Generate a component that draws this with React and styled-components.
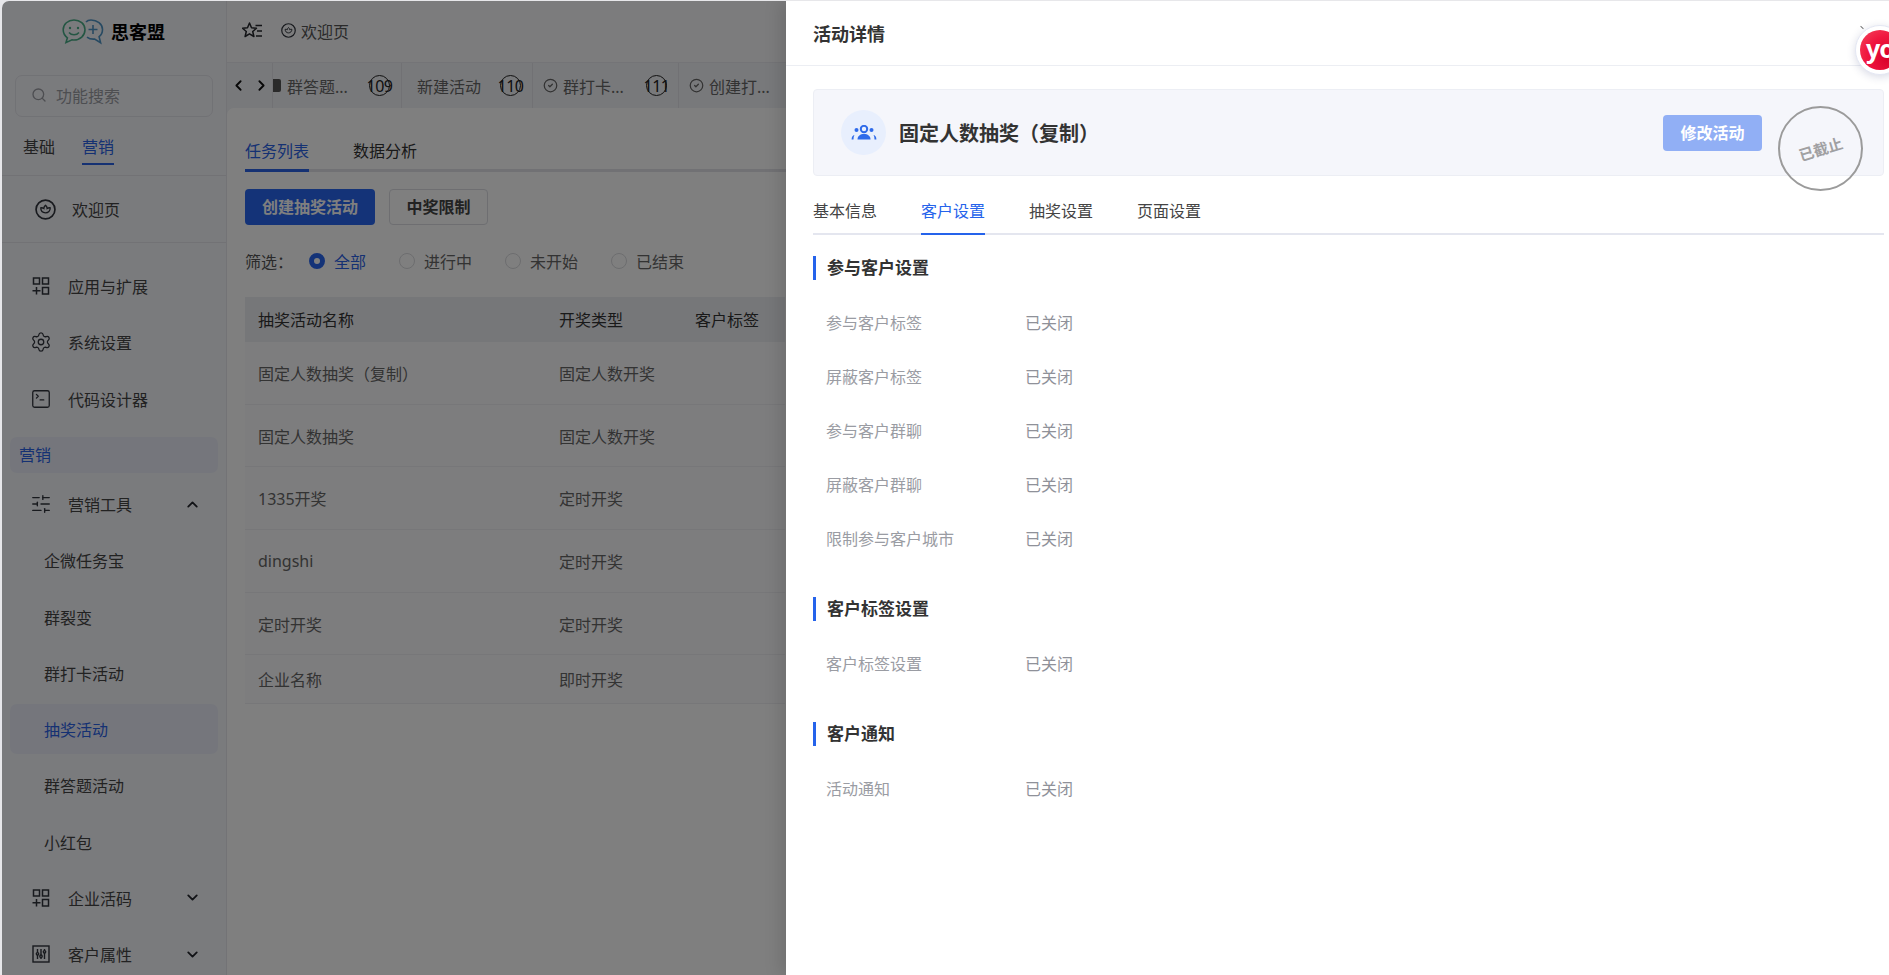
import React from "react";
import styled, { createGlobalStyle } from "styled-components";
import { Search, ChevronUp, ChevronDown, ChevronLeft, ChevronRight, Settings, SquareTerminal, SlidersHorizontal, CircleCheck } from "lucide-react";

const Global = createGlobalStyle`
  html, body { margin: 0; padding: 0; background: #e7e7ea; overflow: hidden; }
  body { font-family: "Noto Sans", "Noto Sans CJK SC", sans-serif; font-size: 16px; color: #333; }
  * { box-sizing: border-box; }
`;

const Frame = styled.div`
  position: relative; margin: 1px 0 0 2px; width: 1887px; height: 974px;
  overflow: hidden; border-top-left-radius: 7px; display: flex; background: #fff;
`;
const Side = styled.aside`
  width: 225px; flex: none; height: 100%; background: #f5f6fb; border-right: 1px solid #e6e7ec;
  overflow: hidden; display: flex; flex-direction: column;
`;
const LogoBar = styled.div`
  height: 62px; flex: none; display: flex; align-items: center; padding-left: 60px; gap: 7px;
`;
const LogoText = styled.span`font-size: 18px; font-weight: 700; color: #000; margin-top: -2px;`;
const SearchBox = styled.div`
  flex: none; height: 42px; margin: 12px 13px 0 13px; border: 1px solid #e3e4ea; border-radius: 7px;
  display: flex; align-items: center; gap: 9px; padding-left: 15px; padding-bottom: 2px; color: #9a9ca3;
`;
const SideTabs = styled.div`
  flex: none; height: 59px; display: flex; gap: 27px; padding-left: 21px; border-bottom: 1px solid #e4e5ea; 
`;
const SideTab = styled.div`
  height: 48px; padding-top: 18px; line-height: 24px; color: ${p => p.$on ? "#2a62e6" : "#444"};
  border-bottom: 2px solid ${p => p.$on ? "#2a62e6" : "transparent"};
`;
const WelcomeRow = styled.div`
  flex: none; height: 67px; display: flex; align-items: center; gap: 16px; padding-left: 33px;
  border-bottom: 1px solid #e4e5ea; color: #444;
`;
const NavList = styled.div`flex: none; padding-top: 15px;`;
const NavItem = styled.div`
  height: 56.3px; flex: none; display: flex; align-items: center; padding-left: 30px; gap: 18px; color: #444; position: relative;
  svg.lead { flex: none; color: #30343c; }
  svg.big { margin: 0 -2px; }
`;
const NavChevron = styled.span`margin-left: auto; margin-right: 25px; display: flex; color: #23262c;`;
const GroupLabel = styled.div`
  flex: none; height: 36px; margin: 10px 8px 3px 8px; background: #eaedf8; border-radius: 7px;
  padding-left: 9px; line-height: 36px; color: #2a62e6;
`;
const SubItem = styled.div`
  flex: none; height: ${p => p.$on ? "50px" : "56.25px"}; margin: ${p => p.$on ? "3.1px 8px" : "0 8px"};
  padding-left: 34px; display: flex; align-items: center; border-radius: 7px; color: ${p => p.$on ? "#2a62e6" : "#444"};
  background: ${p => p.$on ? "#eaedf8" : "transparent"};
`;

const Main = styled.main`flex: 1; min-width: 0; display: flex; flex-direction: column; background: #f1f2f6;`;
const TopBar = styled.div`
  height: 62px; flex: none; display: flex; align-items: center; padding-left: 15px; padding-bottom: 2px; background: #f8f9fb;
  border-bottom: 1px solid #e8e9ee; color: #555;
`;
const Crumb = styled.span`display: flex; align-items: center; gap: 5px; margin-left: 18px;`;
const Strip = styled.div`height: 45px; flex: none; display: flex; align-items: stretch; overflow: hidden;`;
const StripNav = styled.div`
  width: 46px; flex: none; display: flex; align-items: center; justify-content: space-between; padding: 0 2px 0 3px;
  border-right: 1px solid #e2e3e8; color: #111;
`;
const StripTab = styled.div`
  width: ${p => p.$w}px; flex: none; display: flex; align-items: center; padding-left: ${p => p.$pl}px; gap: 5px;
  border-right: 1px solid #e2e3e8; color: #666; position: relative; white-space: nowrap;
`;
const ClippedIcon = styled.span`
  position: absolute; left: 0; top: 16px; width: 8px; height: 13px; border-radius: 0 2px 2px 0; background: #555;
`;
const Count = styled.span`
  position: absolute; right: ${p => p.$r}px; top: 12px; width: 21px; height: 21px; border-radius: 50%; border: 1px solid #222;
  display: flex; align-items: center; justify-content: center; color: #222; font-size: 16px; letter-spacing: -.5px;
`;
const Content = styled.div`
  flex: 1; background: #fff; border-top-left-radius: 7px; padding: 0 0 0 18px; min-height: 0; overflow: hidden;
`;
const ContentTabs = styled.div`
  display: flex; gap: 44px; height: 64px; border-bottom: 3px solid #e2e3e9; margin-right: -400px;
`;
const ContentTab = styled.div`
  height: 64px; padding-top: 31px; line-height: 24px; color: ${p => p.$on ? "#2a62e6" : "#333"};
  border-bottom: 3px solid ${p => p.$on ? "#2a62e6" : "transparent"};
`;
const Actions = styled.div`display: flex; gap: 14px; margin-top: 17px;`;
const PrimaryBtn = styled.button`
  height: 36px; width: 130px; border: 0; border-radius: 4px; background: #2867f0; color: #fff;
  font: 700 16px "Noto Sans", "Noto Sans CJK SC", sans-serif; padding: 0 0 2px;
`;
const GhostBtn = styled.button`
  height: 36px; width: 99px; border: 1px solid #dcdde3; border-radius: 4px; background: #fff; color: #444;
  font: 700 16px "Noto Sans", "Noto Sans CJK SC", sans-serif; padding: 0 0 2px;
`;
const Filter = styled.div`display: flex; align-items: center; height: 24px; margin-top: 24px; color: #555;`;
const FilterLabel = styled.span`width: 64px; flex: none;`;
const RadioItem = styled.span`
  display: flex; align-items: center; gap: 9px; width: ${p => p.$w}px; flex: none; color: ${p => p.$on ? "#2a62e6" : "#666"};
`;
const RadioDot = styled.span`
  width: 16px; height: 16px; border-radius: 50%; flex: none;
  ${p => p.$on ? "border: 5px solid #2867f0; background: #fff;" : "border: 1px solid #d9dade;"}
`;
const Table = styled.div`margin-top: 24px; width: 540px;`;
const HeadRow = styled.div`
  display: grid; grid-template-columns: 301px 136px 1fr; height: 45px; align-items: center;
  background: #eceef3; padding: 0 0 2px 13px; color: #333; white-space: nowrap;
`;
const Row = styled.div`
  display: grid; grid-template-columns: 301px 136px 1fr; height: ${p => p.$h}px; align-items: center;
  padding-left: 13px; border-bottom: 1px solid #eeeff2; background: #fbfbfc; color: #666; white-space: nowrap;
`;

const Overlay = styled.div`position: absolute; inset: 0; background: rgba(0,0,0,.5);`;
const Drawer = styled.section`
  position: absolute; top: 0; bottom: 0; left: 784px; right: 0; background: #fff;
  box-shadow: -6px 0 16px rgba(0,0,0,.12); display: flex; flex-direction: column;
`;
const DrawerHead = styled.header`
  height: 65px; flex: none; display: flex; align-items: center; padding-left: 27px;
  border-bottom: 1px solid #eceef3; font-size: 18px; font-weight: 700; color: #333;
`;
const DrawerBody = styled.div`padding: 23px 5px 0 27px;`;
const Card = styled.div`
  position: relative; height: 87px; display: flex; align-items: center; padding: 0 121px 0 27px;
  background: #f5f6fb; border: 1px solid #eceef4; border-radius: 4px;
`;
const Avatar = styled.div`
  width: 45px; height: 45px; border-radius: 50%; background: #e8effd; display: flex; align-items: center; justify-content: center; flex: none;
`;
const CardTitle = styled.h2`margin: 0 0 0 13px; flex: 1; font-size: 20px; font-weight: 700; color: #333;`;
const EditBtn = styled.button`
  width: 99px; height: 36px; border: 0; border-radius: 4px; background: #91aff5; color: #fff;
  font: 700 16px "Noto Sans", "Noto Sans CJK SC", sans-serif; padding: 0 0 2px;
`;
const Stamp = styled.div`
  position: absolute; top: 16px; right: 20px; width: 85px; height: 85px; border-radius: 50%; border: 2px solid #9b9b9b;
  display: flex; align-items: center; justify-content: center; color: #a0a0a2; font-size: 15px; font-weight: 700;
  span { display: block; transform: translateY(0) rotate(-17deg); }
`;
const DrawerTabs = styled.div`
  height: 59px; display: flex; gap: 44px; align-items: flex-end; border-bottom: 2px solid #e4e6ef;
`;
const DrawerTab = styled.div`
  height: 47px; line-height: 24px; padding-top: 11px; margin-bottom: -2px; color: ${p => p.$on ? "#2563eb" : "#444"};
  border-bottom: 2px solid ${p => p.$on ? "#2563eb" : "transparent"};
`;
const Section = styled.div`margin-top: ${p => p.$mt}px;`;
const SectionTitle = styled.h3`
  margin: 0 0 15px; height: 24px; line-height: 24px; border-left: 3px solid #2563eb; padding-left: 11px;
  font-size: 17px; font-weight: 700; color: #333;
`;
const FieldRow = styled.div`display: flex; align-items: center; height: 54px; padding-left: 13px;`;
const FieldLabel = styled.span`width: 199px; flex: none; color: #9a9ca3;`;
const FieldValue = styled.span`color: #8f9199;`;

const Bubble = styled.div`
  position: absolute; top: 24px; right: -16px; width: 50px; height: 50px; border-radius: 50%; background: #fff;
  border: 1px solid #e4e7f3; box-shadow: 0 2px 8px rgba(40,50,110,.18); display: flex; align-items: center; justify-content: center;
`;
const BubbleInner = styled.div`
  width: 40px; height: 40px; border-radius: 50%; background: radial-gradient(circle at 70% 70%, #d8002a 0, #f0173f 55%, #f5475f 100%);
  color: #fff; font-size: 25px; font-weight: 700; line-height: 36px; text-align: center; letter-spacing: -1px; white-space: nowrap;
`;
const BubbleClose = styled.span`
  position: absolute; top: 26px; right: 25px; width: 4px; height: 1px; background: #777; transform: rotate(45deg);
`;

const Logo = () => (
  <svg width="42" height="26" viewBox="0 0 42 26" fill="none">
    <path d="M12 1C6 1 1.2 5 1.2 10.8c0 3.4 1.7 6.2 4.2 8L4 23.6l6-2.8c.7.1 1.4.2 2 .2 6 0 11-4.4 11-10.2S18 1 12 1Z" stroke="#49ad87" strokeWidth="1.6"/>
    <circle cx="8" cy="9" r="1.2" fill="#49ad87"/><circle cx="16" cy="9" r="1.2" fill="#49ad87"/>
    <path d="M7 13.5c2.5 3 7.5 3 10 0" stroke="#49ad87" strokeWidth="1.5"/>
    <path d="M24 3c1-1.2 3-2 5-2 6 0 11.5 4 11.5 9.500 0 3-1.300 5.600-3.400 7.200l1.500 6-6-3.600c-2.800.2-5.600-.4-7.600-2" stroke="#4f94c4" strokeWidth="1.6"/>
    <path d="M31 6v9M26.500 10.500h9" stroke="#4f94c4" strokeWidth="1.6"/>
  </svg>
);
const Lotus = ({ size = 21 }) => (
  <svg className="lead" width={size} height={size} viewBox="0 0 20 20" fill="none">
    <circle cx="10" cy="10" r="9" stroke="#30343c" strokeWidth="1.6"/>
    <path d="M10 6c1 .8 1.500 1.800 1.600 3 .9-.6 1.900-.8 2.900-.6 0 2.900-1.900 4.800-4.500 4.800S5.500 11.300 5.500 8.400c1-.2 2 0 2.900.6C8.500 7.800 9 6.800 10 6Z" stroke="#30343c" strokeWidth="1.300"/>
  </svg>
);
const Apps = () => (
  <svg className="lead" width="18" height="18" viewBox="0 0 18 18" fill="none" stroke="#30343c" strokeWidth="1.5">
    <rect x="1.500" y="1" width="6" height="6"/><rect x="10.500" y="1" width="6" height="6"/><rect x="10.500" y="10.500" width="6" height="6.500"/>
    <path d="M4.500 10v7.500M.5 13.700h8"/>
  </svg>
);
const Attr = () => (
  <svg className="lead" width="18" height="18" viewBox="0 0 18 18" fill="none" stroke="#30343c" strokeWidth="1.400">
    <rect x="1" y="1" width="16" height="16"/>
    <path d="M5.500 4v3.500M5.500 10v4M9 4v6M9 12.500V14M12.500 4v1.500M12.500 8v6"/>
    <circle cx="5.500" cy="8.800" r="1.200"/><circle cx="9" cy="11.200" r="1.200"/><circle cx="12.500" cy="6.800" r="1.200"/>
  </svg>
);
const StarList = () => (
  <svg width="21" height="18" viewBox="0 0 21 18" fill="none" stroke="#25272c" strokeWidth="1.500" strokeLinejoin="round">
    <path d="M7.500 1l2 4.800 5 .4-3.800 3.300 1.200 5-4.400-2.700-4.400 2.700 1.200-5L.5 6.200l5-.4 2-4.800Z"/>
    <path d="M13.500 3.500H20M15 9h5M14 14h6"/>
  </svg>
);
const People = () => (
  <svg width="26" height="16" viewBox="0 0 26 16" fill="#2f6bea">
    <circle cx="13" cy="4" r="3.200" fill="none" stroke="#2f6bea" strokeWidth="2"/>
    <circle cx="5.500" cy="5" r="2"/><circle cx="20.500" cy="5" r="2"/>
    <path d="M6.500 14.500c0-3.600 2.800-5.500 6.500-5.500s6.500 1.900 6.500 5.500H6.500Z"/>
    <path d="M.6 14.500c0-2.400 1-4 2.800-4.500-.6 1.200-.9 2.800-.9 4.500H.6ZM25.400 14.500c0-2.400-1-4-2.800-4.500.6 1.200.9 2.800.9 4.500h1.900Z"/>
  </svg>
);

const subs = ["企微任务宝", "群裂变", "群打卡活动", "抽奖活动", "群答题活动", "小红包"];
const rows = [
  ["固定人数抽奖（复制）", "固定人数开奖", 63],
  ["固定人数抽奖", "固定人数开奖", 62],
  ["1335开奖", "定时开奖", 63],
  ["dingshi", "定时开奖", 63],
  ["定时开奖", "定时开奖", 62],
  ["企业名称", "即时开奖", 49],
];
const first = ["参与客户标签", "屏蔽客户标签", "参与客户群聊", "屏蔽客户群聊", "限制参与客户城市"];

const Field = ({ label }) => (
  <FieldRow><FieldLabel>{label}</FieldLabel><FieldValue>已关闭</FieldValue></FieldRow>
);

export default function App() {
  return (
    <>
      <Global />
      <Frame>
        <Side>
          <LogoBar><Logo /><LogoText>思客盟</LogoText></LogoBar>
          <SearchBox><Search size={16} /><span>功能搜索</span></SearchBox>
          <SideTabs><SideTab>基础</SideTab><SideTab $on>营销</SideTab></SideTabs>
          <WelcomeRow><Lotus /><span>欢迎页</span></WelcomeRow>
          <NavList>
            <NavItem><Apps /><span>应用与扩展</span></NavItem>
            <NavItem><Settings className="lead big" size={22} strokeWidth={1.4} /><span>系统设置</span></NavItem>
            <NavItem><SquareTerminal className="lead big" size={22} strokeWidth={1.4} /><span>代码设计器</span></NavItem>
          </NavList>
          <GroupLabel>营销</GroupLabel>
          <NavItem><SlidersHorizontal className="lead big" size={22} strokeWidth={1.5} /><span>营销工具</span><NavChevron><ChevronUp size={17} strokeWidth={2.6} /></NavChevron></NavItem>
          {subs.map((s, i) => <SubItem key={s} $on={i === 3}>{s}</SubItem>)}
          <NavItem><Apps /><span>企业活码</span><NavChevron><ChevronDown size={17} strokeWidth={2.6} /></NavChevron></NavItem>
          <NavItem><Attr /><span>客户属性</span><NavChevron><ChevronDown size={17} strokeWidth={2.6} /></NavChevron></NavItem>
        </Side>
        <Main>
          <TopBar>
            <StarList />
            <Crumb><Lotus size={15} /><span>欢迎页</span></Crumb>
          </TopBar>
          <Strip>
            <StripNav><ChevronLeft size={17} strokeWidth={2.6} /><ChevronRight size={17} strokeWidth={2.6} /></StripNav>
            <StripTab $w={129} $pl={14}><ClippedIcon /><span>群答题...</span><Count $r={11}>109</Count></StripTab>
            <StripTab $w={131} $pl={15}><span>新建活动</span><Count $r={11}>110</Count></StripTab>
            <StripTab $w={146} $pl={10}><CircleCheck size={15} /><span>群打卡...</span><Count $r={11}>111</Count></StripTab>
            <StripTab $w={130} $pl={10}><CircleCheck size={15} /><span>创建打...</span></StripTab>
          </Strip>
          <Content>
            <ContentTabs><ContentTab $on>任务列表</ContentTab><ContentTab>数据分析</ContentTab></ContentTabs>
            <Actions><PrimaryBtn>创建抽奖活动</PrimaryBtn><GhostBtn>中奖限制</GhostBtn></Actions>
            <Filter>
              <FilterLabel>筛选：</FilterLabel>
              <RadioItem $w={90} $on><RadioDot $on />全部</RadioItem>
              <RadioItem $w={106}><RadioDot />进行中</RadioItem>
              <RadioItem $w={106}><RadioDot />未开始</RadioItem>
              <RadioItem $w={106}><RadioDot />已结束</RadioItem>
            </Filter>
            <Table>
              <HeadRow><span>抽奖活动名称</span><span>开奖类型</span><span>客户标签</span></HeadRow>
              {rows.map(r => <Row key={r[0]} $h={r[2]}><span>{r[0]}</span><span>{r[1]}</span></Row>)}
            </Table>
          </Content>
        </Main>
        <Overlay />
        <Drawer>
          <DrawerHead>活动详情</DrawerHead>
          <DrawerBody>
            <Card>
              <Avatar><People /></Avatar>
              <CardTitle>固定人数抽奖（复制）</CardTitle>
              <EditBtn>修改活动</EditBtn>
              <Stamp><span>已截止</span></Stamp>
            </Card>
            <DrawerTabs>
              <DrawerTab>基本信息</DrawerTab><DrawerTab $on>客户设置</DrawerTab><DrawerTab>抽奖设置</DrawerTab><DrawerTab>页面设置</DrawerTab>
            </DrawerTabs>
            <Section $mt={21}>
              <SectionTitle>参与客户设置</SectionTitle>
              {first.map(l => <Field key={l} label={l} />)}
            </Section>
            <Section $mt={32}>
              <SectionTitle>客户标签设置</SectionTitle>
              <Field label="客户标签设置" />
            </Section>
            <Section $mt={32}>
              <SectionTitle>客户通知</SectionTitle>
              <Field label="活动通知" />
            </Section>
          </DrawerBody>
        </Drawer>
        <BubbleClose />
        <Bubble><BubbleInner>yo</BubbleInner></Bubble>
      </Frame>
    </>
  );
}
